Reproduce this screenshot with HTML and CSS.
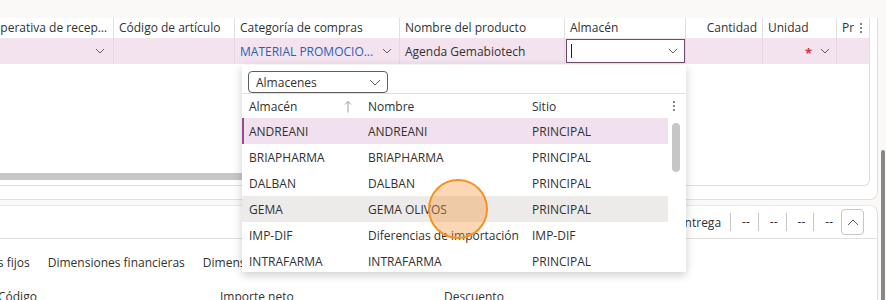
FILE: index.html
```html
<!DOCTYPE html>
<html lang="es">
<head>
  <meta charset="UTF-8">
  <meta name="viewport" content="width=device-width, initial-scale=1.0">
  <title>Líneas de pedido de compra</title>
  <link rel="stylesheet" href="styles.css">
</head>
<body>
  <div class="page">
    <div class="main">
      <!-- Purchase order lines grid -->
      <section class="lines-card">
        <div class="grid">
          <div class="grid-row grid-head">
            <div class="cell c1"><span class="ellipsis">Operativa de recepción</span></div>
            <div class="cell c2">Código de artículo</div>
            <div class="cell c3">Categoría de compras</div>
            <div class="cell c4">Nombre del producto</div>
            <div class="cell c5">Almacén</div>
            <div class="cell c6 num">Cantidad</div>
            <div class="cell c7">Unidad</div>
            <div class="cell c8"><span class="clip">Precio</span><span class="more">
              <svg width="4" height="12" viewBox="0 0 4 12"><circle cx="2" cy="2" r="1"/><circle cx="2" cy="6" r="1"/><circle cx="2" cy="10" r="1"/></svg></span></div>
          </div>
          <div class="grid-row grid-data">
            <div class="cell c1 end"><svg class="chev" width="10" height="6" viewBox="0 0 10 6"><polyline points="1,1 5,5 9,1"/></svg></div>
            <div class="cell c2"></div>
            <div class="cell c3 link"><span class="txt">MATERIAL PROMOCIO...</span><svg class="chev" width="10" height="6" viewBox="0 0 10 6"><polyline points="1,1 5,5 9,1"/></svg></div>
            <div class="cell c4">Agenda Gemabiotech</div>
            <div class="cell c5 editing">
              <div class="input"><span class="caret"></span><svg class="chev" width="10" height="6" viewBox="0 0 10 6"><polyline points="1,1 5,5 9,1"/></svg></div>
            </div>
            <div class="cell c6"></div>
            <div class="cell c7 end"><span class="req">*</span><svg class="chev" width="10" height="6" viewBox="0 0 10 6"><polyline points="1,1 5,5 9,1"/></svg></div>
            <div class="cell c8"></div>
          </div>
          <div class="grid-body"></div>
          <div class="hscroll"><div class="hscroll-thumb"></div></div>
        </div>
      </section>

      <!-- Line details -->
      <section class="details-card">
        <div class="summary">
          <span class="summary-label">Fecha de entrega</span>
          <span class="summary-item">--</span>
          <span class="summary-item">--</span>
          <span class="summary-item">--</span>
          <span class="summary-item">--</span>
          <button class="collapse">
            <svg width="12" height="7" viewBox="0 0 12 7"><polyline points="1,6 6,1 11,6"/></svg>
          </button>
        </div>
        <div class="tabs">
          <span class="tab first">Activos fijos</span>
          <span class="tab">Dimensiones financieras</span>
          <span class="tab">Dimensiones de inventario</span>
        </div>
        <div class="fields">
          <span class="field f1">Código</span>
          <span class="field f2">Importe neto</span>
          <span class="field f3">Descuento</span>
        </div>
      </section>
    </div>
    <div class="vscroll"><div class="vscroll-thumb"></div></div>
  </div>

  <!-- Warehouse lookup -->
  <div class="lookup">
    <div class="lookup-bar">
      <div class="combo"><span>Almacenes</span><svg class="chev" width="12" height="7" viewBox="0 0 12 7"><polyline points="1,1 6,6 11,1"/></svg></div>
    </div>
    <div class="lookup-head">
      <span class="lc la">Almacén<svg class="sort" width="8" height="13" viewBox="0 0 8 13"><line x1="4" y1="1.5" x2="4" y2="12.5"/><polyline points="1,4.5 4,1.5 7,4.5"/></svg></span>
      <span class="lc lb">Nombre</span>
      <span class="lc lcc">Sitio</span>
      <span class="head-more"><svg width="4" height="12" viewBox="0 0 4 12"><circle cx="2" cy="2" r="1"/><circle cx="2" cy="6" r="1"/><circle cx="2" cy="10" r="1"/></svg></span>
    </div>
    <div class="lookup-body">
      <div class="lookup-rows">
        <div class="lrow selected"><span class="lc la">ANDREANI</span><span class="lc lb">ANDREANI</span><span class="lc lcc">PRINCIPAL</span></div>
        <div class="lrow"><span class="lc la">BRIAPHARMA</span><span class="lc lb">BRIAPHARMA</span><span class="lc lcc">PRINCIPAL</span></div>
        <div class="lrow"><span class="lc la">DALBAN</span><span class="lc lb">DALBAN</span><span class="lc lcc">PRINCIPAL</span></div>
        <div class="lrow hover"><span class="lc la">GEMA</span><span class="lc lb">GEMA OLIVOS</span><span class="lc lcc">PRINCIPAL</span></div>
        <div class="lrow"><span class="lc la">IMP-DIF</span><span class="lc lb">Diferencias de importación</span><span class="lc lcc">IMP-DIF</span></div>
        <div class="lrow"><span class="lc la">INTRAFARMA</span><span class="lc lb">INTRAFARMA</span><span class="lc lcc">PRINCIPAL</span></div>
      </div>
      <div class="lookup-scroll"><div class="lookup-thumb"></div></div>
    </div>
  </div>

  <div class="cursor-ring"></div>
</body>
</html>
```

FILE: styles.css
```css
body {
  margin: 0;
  overflow: hidden;
  font-family: "Open Sans", "Noto Sans", sans-serif;
  font-size: 12px;
  color: #323130;
  background-color: #faf9f8;
}

.page {
  display: flex;
  height: 300px;
  overflow: hidden;
}

.main {
  width: 878px;
}

/* ---------- lines grid ---------- */

.lines-card {
  margin-top: 18px;
  height: 182px;
  box-sizing: border-box;
  padding-right: 7px;
  background: white;
  border-right: 1px solid #e1dfdd;
  border-bottom: 1px solid #e1dfdd;
  border-bottom-right-radius: 8px;
}

.grid {
  height: 168px;
  box-sizing: border-box;
  border-right: 1px solid #e1dfdd;
  border-bottom: 1px solid #e1dfdd;
  border-bottom-right-radius: 6px;
  overflow: hidden;
}

.grid-row {
  display: flex;
  margin-left: -9px;
}

.cell {
  box-sizing: border-box;
  display: flex;
  align-items: center;
  padding: 0 5px;
  border-right: 1px solid #e1dfdd;
  white-space: nowrap;
  overflow: hidden;
}

.c1 { width: 123px; }
.c2 { width: 121px; }
.c3 { width: 165px; }
.c4 { width: 165px; }
.c5 { width: 121px; }
.c6 { width: 77px; }
.c7 { width: 74px; }
.c8 { width: 32px; border-right: none; }

.grid-head .cell {
  height: 20px;
  padding-bottom: 1px;
}

.grid-head .c1 {
  padding-left: 0;
  padding-right: 2px;
}

.ellipsis {
  overflow: hidden;
  text-overflow: ellipsis;
}

.num {
  justify-content: flex-end;
}

.grid-head .c8 {
  padding-right: 0;
}

.clip {
  width: 12px;
  overflow: hidden;
}

.more {
  margin-left: 5px;
  display: flex;
}

.more svg,
.head-more svg {
  fill: #605e5c;
}

.grid-data .cell {
  height: 26px;
  background-color: #f2e3ef;
  border-right-color: #e8d6e4;
}

.end {
  justify-content: flex-end;
}

.chev {
  fill: none;
  stroke: #605e5c;
  stroke-width: 1;
}

.grid-data .c1 {
  padding-right: 8px;
}

.link {
  color: #2b5fb5;
}

.link .txt {
  flex: 1;
}

.link .chev {
  margin-right: 2px;
}

.grid-data .editing {
  padding: 1px 0 1px 1px;
}

.input {
  flex: 1;
  height: 24px;
  box-sizing: border-box;
  border: 1px solid #6f4a6c;
  background: white;
  display: flex;
  align-items: center;
  justify-content: space-between;
  padding: 0 6px 0 4px;
}

.caret {
  width: 1px;
  height: 14px;
  background: #201f1e;
}

.req {
  color: #d13438;
  font-weight: bold;
  font-size: 13px;
  margin-right: 8px;
  margin-top: 3px;
}

.grid-data .c7 {
  padding-right: 6px;
}

.grid-body {
  height: 109px;
}

.hscroll {
  height: 12px;
}

.hscroll-thumb {
  width: 660px;
  height: 7px;
  background-color: #c8c6c4;
}

/* ---------- line details ---------- */

.details-card {
  margin-top: 5px;
  height: 95px;
  background: white;
  border-right: 1px solid #e1dfdd;
  border-top: 1px solid #edebe9;
  border-top-right-radius: 8px;
}

.summary {
  height: 32px;
  display: flex;
  align-items: center;
  justify-content: flex-end;
  padding-right: 13px;
  border-bottom: 1px solid #e1dfdd;
}

.summary-label {
  padding-right: 9px;
}

.summary-item {
  border-left: 1px solid #c8c6c4;
  line-height: 18px;
  padding: 0 8px 0 11px;
}

.collapse {
  width: 23px;
  height: 26px;
  padding: 0;
  border: 1px solid #c8c6c4;
  border-radius: 4px;
  background: white;
  display: flex;
  align-items: center;
  justify-content: center;
}

.collapse svg {
  fill: none;
  stroke: #605e5c;
}

.tabs {
  display: flex;
  gap: 18px;
  padding-top: 16px;
  line-height: 16px;
  white-space: nowrap;
}

.tab.first {
  margin-left: -36px;
}

.fields {
  display: flex;
  padding-top: 18px;
  line-height: 16px;
}

.field.f1 { width: 222px; margin-left: -2px; }
.field.f2 { width: 224px; }

/* ---------- page scrollbar ---------- */

.vscroll {
  width: 8px;
  padding-top: 150px;
  box-sizing: border-box;
}

.vscroll-thumb {
  margin-left: 3px;
  width: 4px;
  height: 160px;
  background-color: #8a8886;
  border-radius: 2px;
}

/* ---------- warehouse lookup ---------- */

.lookup {
  position: absolute;
  left: 242px;
  top: 65px;
  width: 444px;
  height: 207px;
  overflow: hidden;
  background: white;
  box-shadow: 0 3px 9px rgba(0, 0, 0, 0.2);
}

.lookup-bar {
  height: 28px;
  padding: 6px 0 0 6px;
  box-sizing: border-box;
}

.combo {
  width: 140px;
  height: 22px;
  box-sizing: border-box;
  border: 1px solid #605e5c;
  border-radius: 4px;
  display: flex;
  align-items: center;
  justify-content: space-between;
  padding: 0 6px 0 7px;
}

.lookup-head,
.lrow {
  display: flex;
  align-items: center;
  padding-left: 7px;
  white-space: nowrap;
}

.lookup-head {
  height: 24px;
  border-top: 1px solid #e1dfdd;
  position: relative;
}

.lc.la { width: 119px; }
.lc.lb { width: 164px; }

.lookup-head .la {
  display: flex;
  align-items: center;
  justify-content: space-between;
  padding-right: 16px;
  box-sizing: border-box;
}

.sort {
  fill: none;
  stroke: #a19f9d;
}

.head-more {
  position: absolute;
  left: 430px;
  top: 6px;
  display: flex;
}

.lookup-body {
  display: flex;
}

.lookup-rows {
  width: 426px;
}

.lrow {
  height: 26px;
}

.lrow.selected {
  background-color: #f1e1ee;
  box-shadow: inset 2px 0 0 #9a4a94;
}

.lrow.hover {
  background-color: #edebe9;
}

.lookup-scroll {
  flex: 1;
  padding: 5px 0 0 4px;
}

.lookup-thumb {
  width: 8px;
  height: 49px;
  border-radius: 4px;
  background-color: #c8c6c4;
}

/* click highlight of the screen recorder */
.cursor-ring {
  position: absolute;
  left: 428px;
  top: 179px;
  width: 56px;
  height: 56px;
  border: 2px solid #f4931f;
  border-radius: 50%;
  background-color: rgba(244, 150, 60, 0.38);
}
```
